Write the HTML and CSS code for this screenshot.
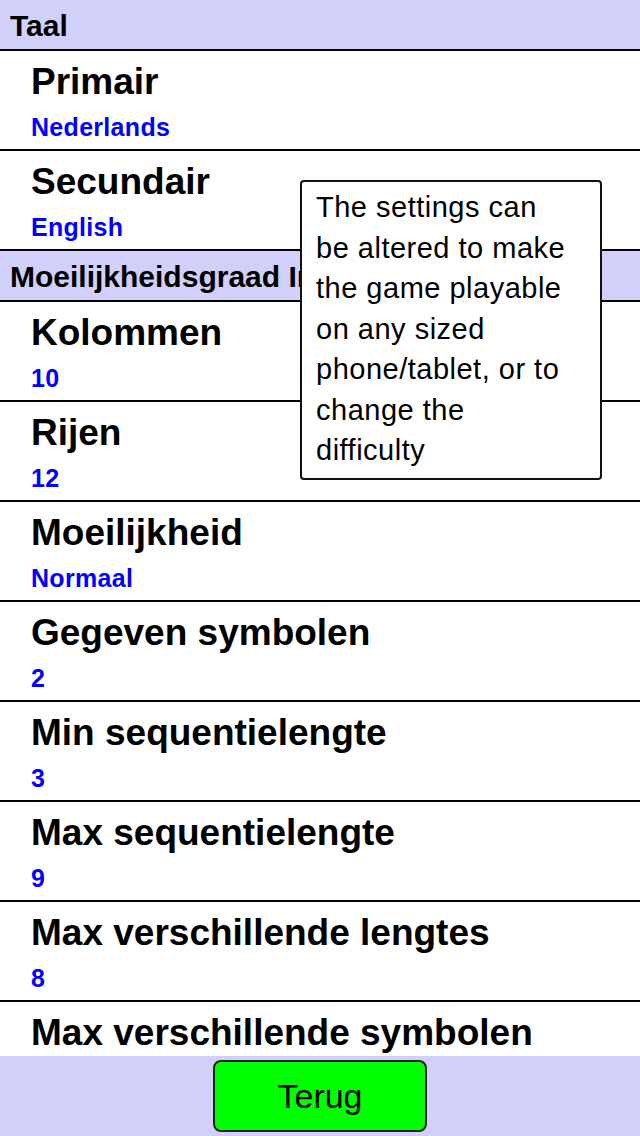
FILE: index.html
```html
<!DOCTYPE html>
<html lang="nl">
<head>
  <meta charset="UTF-8">
  <meta name="viewport" content="width=device-width, initial-scale=1.0">
  <title>Instellingen</title>
  <link rel="stylesheet" href="styles.css">
</head>
<body>
  <div class="screen">
    <div class="settings">
      <div class="section-title">Taal</div>
      <div class="setting">
        <div class="setting-name">Primair</div>
        <div class="setting-value">Nederlands</div>
      </div>
      <div class="setting">
        <div class="setting-name">Secundair</div>
        <div class="setting-value">English</div>
      </div>

      <div class="section-title">Moeilijkheidsgraad Instellingen</div>
      <div class="setting">
        <div class="setting-name">Kolommen</div>
        <div class="setting-value">10</div>
      </div>
      <div class="setting">
        <div class="setting-name">Rijen</div>
        <div class="setting-value">12</div>
      </div>
      <div class="setting">
        <div class="setting-name">Moeilijkheid</div>
        <div class="setting-value">Normaal</div>
      </div>
      <div class="setting">
        <div class="setting-name">Gegeven symbolen</div>
        <div class="setting-value">2</div>
      </div>
      <div class="setting">
        <div class="setting-name">Min sequentielengte</div>
        <div class="setting-value">3</div>
      </div>
      <div class="setting">
        <div class="setting-name">Max sequentielengte</div>
        <div class="setting-value">9</div>
      </div>
      <div class="setting">
        <div class="setting-name">Max verschillende lengtes</div>
        <div class="setting-value">8</div>
      </div>
      <div class="setting">
        <div class="setting-name">Max verschillende symbolen</div>
        <div class="setting-value">5</div>
      </div>
    </div>

    <div class="footer">
      <button class="back-button">Terug</button>
    </div>

    <!-- uitleg ballon -->
    <div class="hint">
      The settings can<br>
      be altered to make<br>
      the game playable<br>
      on any sized<br>
      phone/tablet, or to<br>
      change the<br>
      difficulty
    </div>
  </div>
</body>
</html>
```

FILE: styles.css
```css
body {
  font-family: "Liberation Sans", Arial, sans-serif;
  margin: 0;
  padding: 0;
  background-color: #fff;
}

.screen {
  position: relative;
  width: 640px;
  height: 1136px;
  display: flex;
  flex-direction: column;
  overflow: hidden;
}

.settings {
  flex: 1;
  overflow: hidden;
}

.section-title {
  height: 47px;
  padding: 2px 0 0 10px;
  line-height: 47px;
  font-size: 30px;
  font-weight: bold;
  color: #000;
  background-color: #d0d0fb;
  border-bottom: 2px solid #000;
  white-space: nowrap;
  overflow: hidden;
}

.setting {
  height: 87px;
  padding: 11px 0 0 31px;
  border-bottom: 2px solid #000;
}

.setting-name {
  font-size: 37px;
  line-height: 40px;
  font-weight: bold;
  color: #000;
  white-space: nowrap;
}

.setting-value {
  margin-top: 10px;
  font-size: 25px;
  line-height: 30px;
  font-weight: bold;
  letter-spacing: 0.3px;
  color: #0000ff;
}

.footer {
  height: 80px;
  flex-shrink: 0;
  background-color: #d0d0fb;
  display: flex;
  justify-content: center;
  align-items: center;
}

.back-button {
  width: 214px;
  height: 72px;
  background-color: #00ff00;
  border: 2px solid #222;
  border-radius: 8px;
  font-family: "Liberation Sans", Arial, sans-serif;
  font-size: 34px;
  color: #000;
  padding: 0;
}

.hint {
  position: absolute;
  left: 300px;
  top: 180px;
  width: 268px;
  height: 291px;
  padding: 5px 16px 0 14px;
  background-color: #fff;
  border: 2px solid #111;
  border-radius: 4px;
  font-size: 29px;
  line-height: 40.5px;
  letter-spacing: 0.5px;
  color: #000;
  white-space: nowrap;
}
```
